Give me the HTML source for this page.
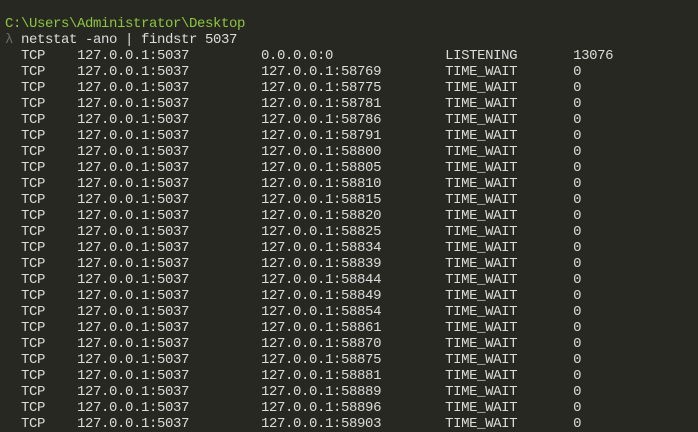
<!DOCTYPE html><html><head><style>
html,body{margin:0;padding:0;background:#272822;width:698px;height:423px;overflow:hidden}
pre{margin:0;position:absolute;left:5px;top:16px;font-family:"Liberation Mono",monospace;font-size:14px;letter-spacing:-0.4px;line-height:16px;color:#dcdcdc}
.g{color:#8dc63f}.l{color:#6b6b6b}
</style></head><body><pre><span class="g">C:\Users\Administrator\Desktop</span>
<span class="l">λ</span> netstat -ano | findstr 5037
  TCP    127.0.0.1:5037         0.0.0.0:0              LISTENING       13076
  TCP    127.0.0.1:5037         127.0.0.1:58769        TIME_WAIT       0
  TCP    127.0.0.1:5037         127.0.0.1:58775        TIME_WAIT       0
  TCP    127.0.0.1:5037         127.0.0.1:58781        TIME_WAIT       0
  TCP    127.0.0.1:5037         127.0.0.1:58786        TIME_WAIT       0
  TCP    127.0.0.1:5037         127.0.0.1:58791        TIME_WAIT       0
  TCP    127.0.0.1:5037         127.0.0.1:58800        TIME_WAIT       0
  TCP    127.0.0.1:5037         127.0.0.1:58805        TIME_WAIT       0
  TCP    127.0.0.1:5037         127.0.0.1:58810        TIME_WAIT       0
  TCP    127.0.0.1:5037         127.0.0.1:58815        TIME_WAIT       0
  TCP    127.0.0.1:5037         127.0.0.1:58820        TIME_WAIT       0
  TCP    127.0.0.1:5037         127.0.0.1:58825        TIME_WAIT       0
  TCP    127.0.0.1:5037         127.0.0.1:58834        TIME_WAIT       0
  TCP    127.0.0.1:5037         127.0.0.1:58839        TIME_WAIT       0
  TCP    127.0.0.1:5037         127.0.0.1:58844        TIME_WAIT       0
  TCP    127.0.0.1:5037         127.0.0.1:58849        TIME_WAIT       0
  TCP    127.0.0.1:5037         127.0.0.1:58854        TIME_WAIT       0
  TCP    127.0.0.1:5037         127.0.0.1:58861        TIME_WAIT       0
  TCP    127.0.0.1:5037         127.0.0.1:58870        TIME_WAIT       0
  TCP    127.0.0.1:5037         127.0.0.1:58875        TIME_WAIT       0
  TCP    127.0.0.1:5037         127.0.0.1:58881        TIME_WAIT       0
  TCP    127.0.0.1:5037         127.0.0.1:58889        TIME_WAIT       0
  TCP    127.0.0.1:5037         127.0.0.1:58896        TIME_WAIT       0
  TCP    127.0.0.1:5037         127.0.0.1:58903        TIME_WAIT       0
</pre></body></html>
